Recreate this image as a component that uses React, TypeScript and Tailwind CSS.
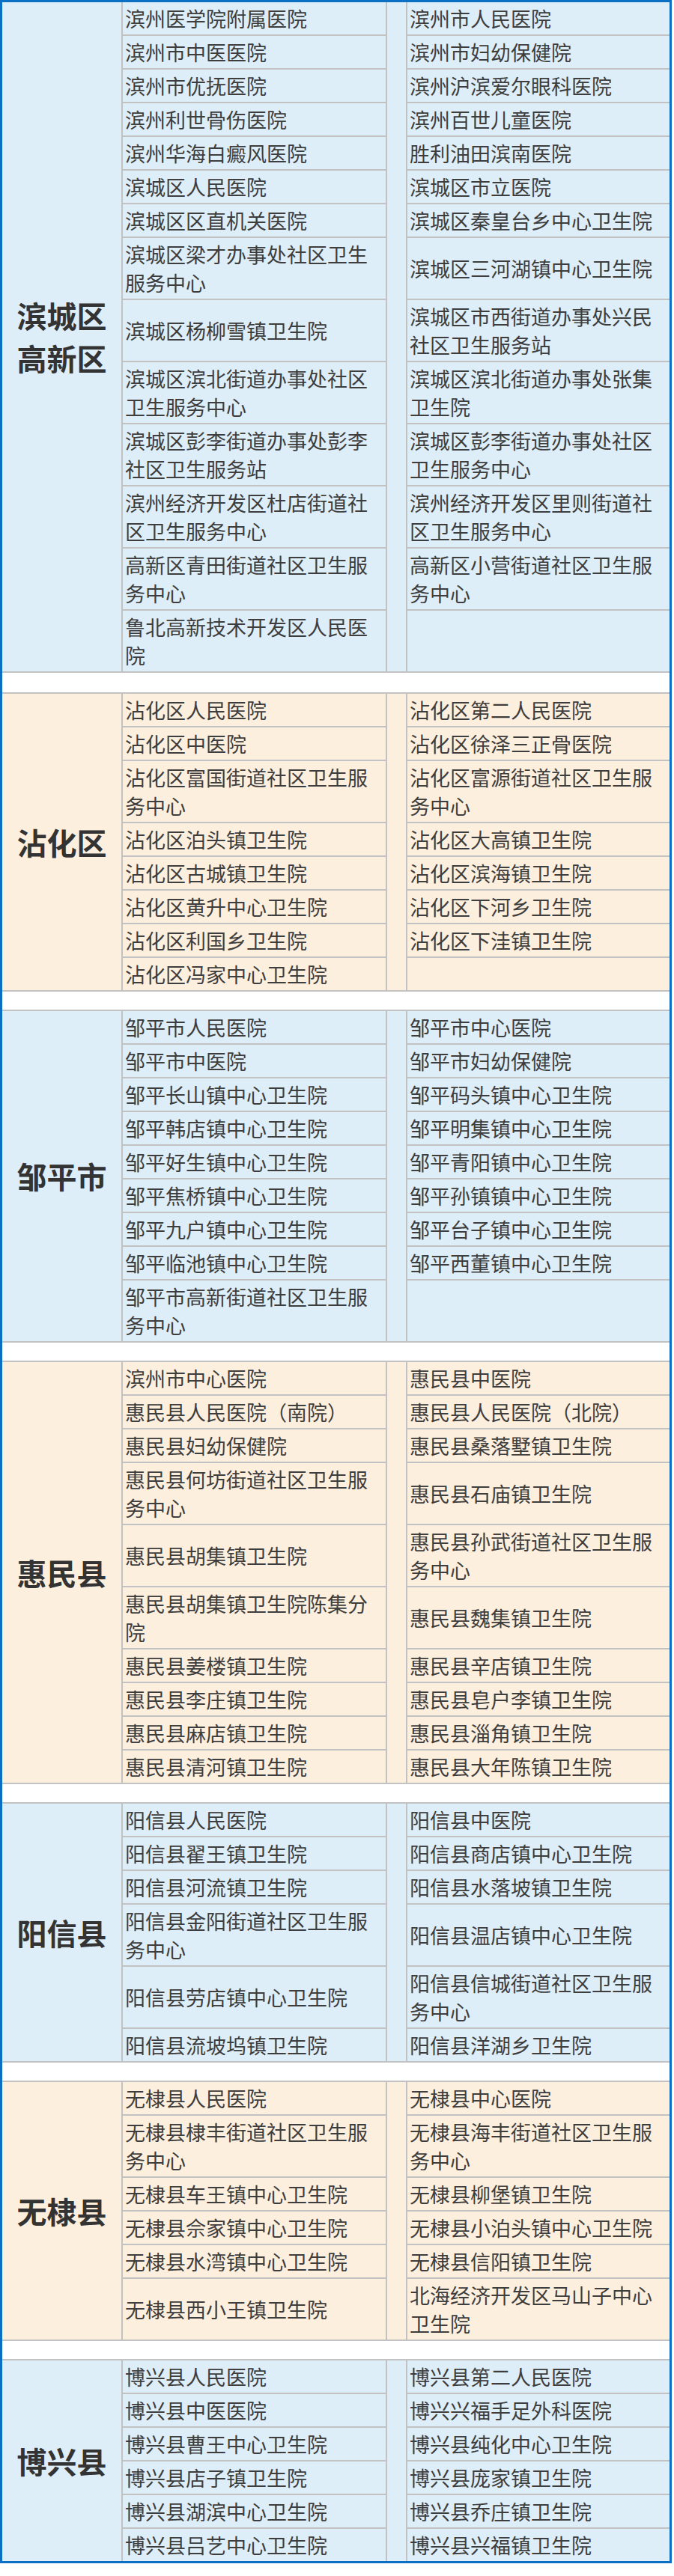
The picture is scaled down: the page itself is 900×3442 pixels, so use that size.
import React from 'react';

type Section = {
  label: string[];
  tone: 'blue' | 'orange';
  rows: [string, string][];
};

const sections: Section[] = [
  {
    label: ['滨城区', '高新区'],
    tone: 'blue',
    rows: [
      ['滨州医学院附属医院', '滨州市人民医院'],
      ['滨州市中医医院', '滨州市妇幼保健院'],
      ['滨州市优抚医院', '滨州沪滨爱尔眼科医院'],
      ['滨州利世骨伤医院', '滨州百世儿童医院'],
      ['滨州华海白癜风医院', '胜利油田滨南医院'],
      ['滨城区人民医院', '滨城区市立医院'],
      ['滨城区区直机关医院', '滨城区秦皇台乡中心卫生院'],
      ['滨城区梁才办事处社区卫生服务中心', '滨城区三河湖镇中心卫生院'],
      ['滨城区杨柳雪镇卫生院', '滨城区市西街道办事处兴民社区卫生服务站'],
      ['滨城区滨北街道办事处社区卫生服务中心', '滨城区滨北街道办事处张集卫生院'],
      ['滨城区彭李街道办事处彭李社区卫生服务站', '滨城区彭李街道办事处社区卫生服务中心'],
      ['滨州经济开发区杜店街道社区卫生服务中心', '滨州经济开发区里则街道社区卫生服务中心'],
      ['高新区青田街道社区卫生服务中心', '高新区小营街道社区卫生服务中心'],
      ['鲁北高新技术开发区人民医院', ''],
    ],
  },
  {
    label: ['沾化区'],
    tone: 'orange',
    rows: [
      ['沾化区人民医院', '沾化区第二人民医院'],
      ['沾化区中医院', '沾化区徐泽三正骨医院'],
      ['沾化区富国街道社区卫生服务中心', '沾化区富源街道社区卫生服务中心'],
      ['沾化区泊头镇卫生院', '沾化区大高镇卫生院'],
      ['沾化区古城镇卫生院', '沾化区滨海镇卫生院'],
      ['沾化区黄升中心卫生院', '沾化区下河乡卫生院'],
      ['沾化区利国乡卫生院', '沾化区下洼镇卫生院'],
      ['沾化区冯家中心卫生院', ''],
    ],
  },
  {
    label: ['邹平市'],
    tone: 'blue',
    rows: [
      ['邹平市人民医院', '邹平市中心医院'],
      ['邹平市中医院', '邹平市妇幼保健院'],
      ['邹平长山镇中心卫生院', '邹平码头镇中心卫生院'],
      ['邹平韩店镇中心卫生院', '邹平明集镇中心卫生院'],
      ['邹平好生镇中心卫生院', '邹平青阳镇中心卫生院'],
      ['邹平焦桥镇中心卫生院', '邹平孙镇镇中心卫生院'],
      ['邹平九户镇中心卫生院', '邹平台子镇中心卫生院'],
      ['邹平临池镇中心卫生院', '邹平西董镇中心卫生院'],
      ['邹平市高新街道社区卫生服务中心', ''],
    ],
  },
  {
    label: ['惠民县'],
    tone: 'orange',
    rows: [
      ['滨州市中心医院', '惠民县中医院'],
      ['惠民县人民医院（南院）', '惠民县人民医院（北院）'],
      ['惠民县妇幼保健院', '惠民县桑落墅镇卫生院'],
      ['惠民县何坊街道社区卫生服务中心', '惠民县石庙镇卫生院'],
      ['惠民县胡集镇卫生院', '惠民县孙武街道社区卫生服务中心'],
      ['惠民县胡集镇卫生院陈集分院', '惠民县魏集镇卫生院'],
      ['惠民县姜楼镇卫生院', '惠民县辛店镇卫生院'],
      ['惠民县李庄镇卫生院', '惠民县皂户李镇卫生院'],
      ['惠民县麻店镇卫生院', '惠民县淄角镇卫生院'],
      ['惠民县清河镇卫生院', '惠民县大年陈镇卫生院'],
    ],
  },
  {
    label: ['阳信县'],
    tone: 'blue',
    rows: [
      ['阳信县人民医院', '阳信县中医院'],
      ['阳信县翟王镇卫生院', '阳信县商店镇中心卫生院'],
      ['阳信县河流镇卫生院', '阳信县水落坡镇卫生院'],
      ['阳信县金阳街道社区卫生服务中心', '阳信县温店镇中心卫生院'],
      ['阳信县劳店镇中心卫生院', '阳信县信城街道社区卫生服务中心'],
      ['阳信县流坡坞镇卫生院', '阳信县洋湖乡卫生院'],
    ],
  },
  {
    label: ['无棣县'],
    tone: 'orange',
    rows: [
      ['无棣县人民医院', '无棣县中心医院'],
      ['无棣县棣丰街道社区卫生服务中心', '无棣县海丰街道社区卫生服务中心'],
      ['无棣县车王镇中心卫生院', '无棣县柳堡镇卫生院'],
      ['无棣县佘家镇中心卫生院', '无棣县小泊头镇中心卫生院'],
      ['无棣县水湾镇中心卫生院', '无棣县信阳镇卫生院'],
      ['无棣县西小王镇卫生院', '北海经济开发区马山子中心卫生院'],
    ],
  },
  {
    label: ['博兴县'],
    tone: 'blue',
    rows: [
      ['博兴县人民医院', '博兴县第二人民医院'],
      ['博兴县中医医院', '博兴兴福手足外科医院'],
      ['博兴县曹王中心卫生院', '博兴县纯化中心卫生院'],
      ['博兴县店子镇卫生院', '博兴县庞家镇卫生院'],
      ['博兴县湖滨中心卫生院', '博兴县乔庄镇卫生院'],
      ['博兴县吕艺中心卫生院', '博兴县兴福镇卫生院'],
    ],
  },
];

const cell =
  'border-2 border-[#c2c2c2] px-[3px] pt-[3px] pb-[2px] text-[27px] leading-[38px] text-[#3d3d3d] align-middle break-all';

function SectionRows({ s, index, last }: { s: Section; index: number; last: boolean }) {
  const bg = s.tone === 'blue' ? 'bg-[#ddeef9]' : 'bg-[#fdefdd]';
  return (
    <>
      {s.rows.map(([a, b], i) => (
        <tr key={i} className={bg}>
          {i === 0 && (
            <td
              rowSpan={s.rows.length}
              className="border-2 border-[#c2c2c2] text-center align-middle text-[40px] leading-[57px] font-bold text-[#333333]"
            >
              {s.label.map((l) => (
                <div key={l}>{l}</div>
              ))}
            </td>
          )}
          <td className={cell}>{a}</td>
          {i === 0 && <td rowSpan={s.rows.length} className="border-2 border-[#c2c2c2]" />}
          <td className={cell}>{b}</td>
        </tr>
      ))}
      {!last && (
        <tr className="bg-white">
          <td
            colSpan={4}
            className={index === 0 ? 'h-[28px] p-0 border-2 border-[#c2c2c2]' : 'h-[26px] p-0 border-2 border-[#c2c2c2]'}
          />
        </tr>
      )}
    </>
  );
}

export default function App() {
  return (
    <div className="min-h-[3442px] w-[900px] bg-white font-['Noto_Sans_CJK_SC','Noto_Sans',sans-serif]">
      <div className="w-[897px] border-[3px] border-[#0b6fc3]">
        <table className="w-[891px] table-fixed border-collapse border-hidden">
          <colgroup>
            <col className="w-[160px]" />
            <col className="w-[353px]" />
            <col className="w-[27px]" />
            <col className="w-[351px]" />
          </colgroup>
          <tbody>
            {sections.map((s, i) => (
              <SectionRows key={s.label[0]} s={s} index={i} last={i === sections.length - 1} />
            ))}
          </tbody>
        </table>
      </div>
    </div>
  );
}
